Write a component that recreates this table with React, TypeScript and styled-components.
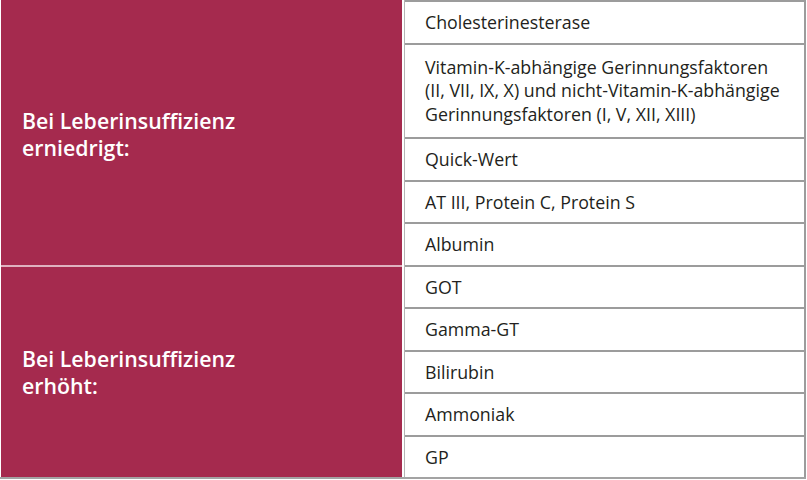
import styled, { createGlobalStyle } from "styled-components";

const GlobalStyle = createGlobalStyle`
  html, body {
    margin: 0;
    padding: 0;
    background: #ffffff;
  }
  body {
    font-family: "Open Sans", "Noto Sans", sans-serif;
  }
`;

type Group = {
  label: string[],
  items: string[][],
};

const groups : Group[] = [
  {
    label: ["Bei Leberinsuffizienz", "erniedrigt:"],
    items: [
      ["Cholesterinesterase"],
      [
        "Vitamin-K-abhängige Gerinnungsfaktoren",
        "(II, VII, IX, X) und nicht-Vitamin-K-abhängige",
        "Gerinnungsfaktoren (I, V, XII, XIII)",
      ],
      ["Quick-Wert"],
      ["AT III, Protein C, Protein S"],
      ["Albumin"],
    ],
  },
  {
    label: ["Bei Leberinsuffizienz", "erhöht:"],
    items: [
      ["GOT"],
      ["Gamma-GT"],
      ["Bilirubin"],
      ["Ammoniak"],
      ["GP"],
    ],
  },
];

export default function App() {
  return (
    <>
      <GlobalStyle />
      <Table>
        {groups.map((group, i) => (
          <GroupRow key={i}>
            <Label $first={i === 0}>
              <LabelText>
                {group.label.map((line) => <div key={line}>{line}</div>)}
              </LabelText>
            </Label>
            <List>
              {group.items.map((item, j) => (
                <Item key={j} $multi={item.length > 1}>
                  {item.map((line) => <div key={line}>{line}</div>)}
                </Item>
              ))}
            </List>
          </GroupRow>
        ))}
      </Table>
    </>
  );
}

const Table = styled.div`
  display: flex;
  flex-direction: column;
  width: 806px;
  border-bottom: 2px solid #a3a3a3;
`;

const GroupRow = styled.div`
  display: flex;
`;

const Label = styled.div<{ $first: boolean }>`
  width: 401px;
  box-sizing: border-box;
  margin-left: 1px;
  display: flex;
  align-items: center;
  padding-left: 21px;
  background: #a52a4e;
  border-top: 2px solid ${(p) => (p.$first ? "#a52a4e" : "#dfb2bf")};
`;

const LabelText = styled.div`
  color: #ffffff;
  font-family: "Open Sans", "Noto Sans", sans-serif;
  font-weight: 600;
  font-size: 21.3px;
  line-height: 27px;
  padding-top: 1px;
`;

const List = styled.div`
  flex: 1;
  display: flex;
  flex-direction: column;
  margin-left: 2px;
  border-left: 1px solid #b5b5b5;
  border-right: 2px solid #9c9c9c;
`;

const Item = styled.div<{ $multi: boolean }>`
  border-top: 2px solid #9c9c9c;
  padding: ${(p) => (p.$multi ? "11px 0 11px 20px" : "9px 0 8.5px 20px")};
  color: #231f20;
  font-size: 17.8px;
  line-height: ${(p) => (p.$multi ? "23.5px" : "23px")};
  background: #ffffff;
`;
